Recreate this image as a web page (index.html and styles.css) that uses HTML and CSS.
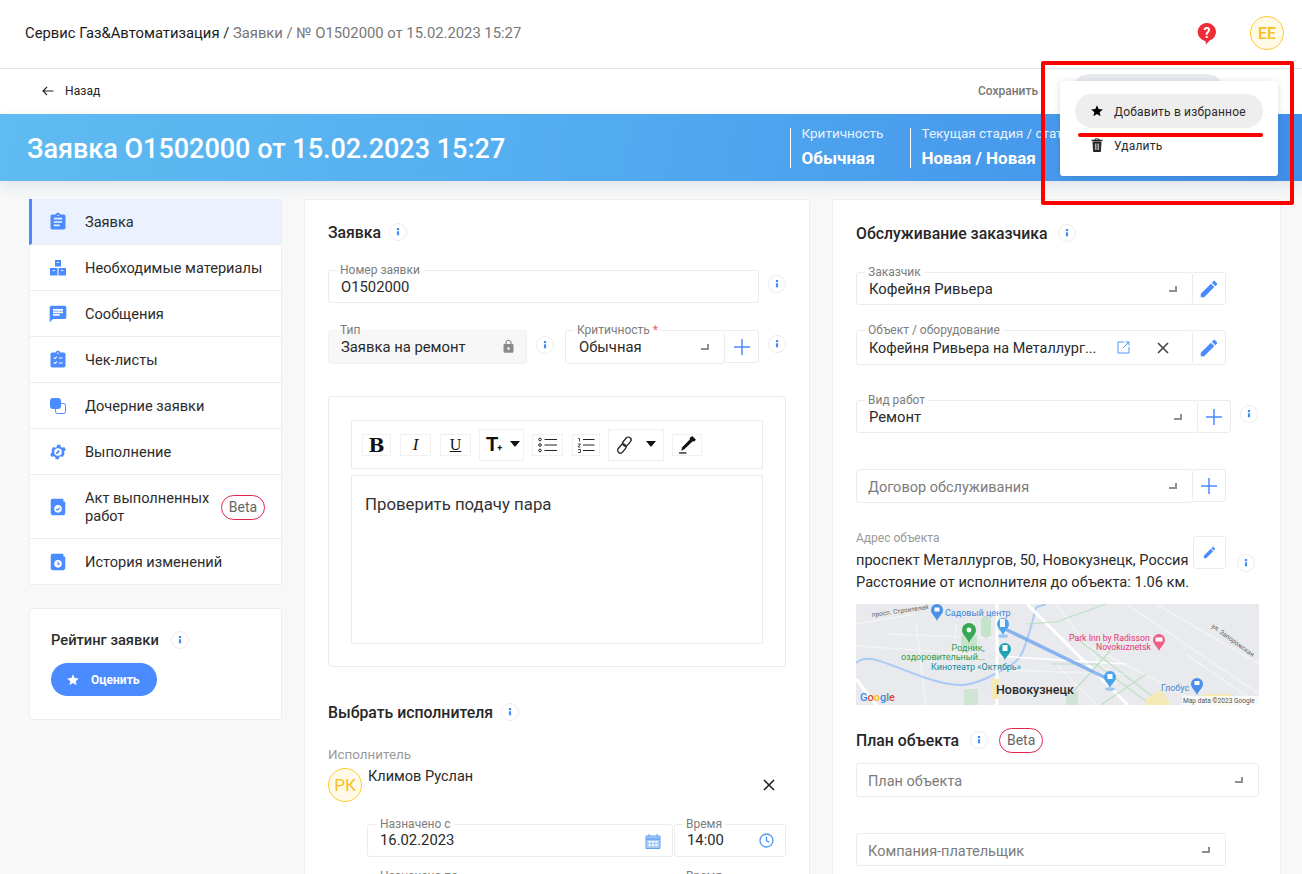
FILE: index.html
```html
<!DOCTYPE html>
<html lang="ru">
<head>
<meta charset="utf-8">
<title>Заявка О1502000</title>
<link rel="stylesheet" href="styles.css">
</head>
<body>
<svg class="defs" width="0" height="0" aria-hidden="true">
  <symbol id="i-star" viewBox="0 0 24 24"><path d="M12 17.27L18.18 21l-1.64-7.03L22 9.24l-7.19-.61L12 2 9.19 8.63 2 9.24l5.46 4.73L5.82 21z"/></symbol>
  <symbol id="i-edit" viewBox="0 0 24 24"><path d="M3 17.25V21h3.75L17.81 9.94l-3.75-3.75L3 17.25zM20.71 7.04c.39-.39.39-1.02 0-1.41l-2.34-2.34c-.39-.39-1.02-.39-1.41 0l-1.83 1.83 3.75 3.75 1.83-1.83z"/></symbol>
  <symbol id="i-plus" viewBox="0 0 18 18"><path d="M9 1v16M1 9h16" stroke="currentColor" stroke-width="1.5" fill="none"/></symbol>
  <symbol id="i-close" viewBox="0 0 12 12"><path d="M1 1l10 10M11 1L1 11" stroke="currentColor" stroke-width="1.6" fill="none"/></symbol>
  <symbol id="i-info" viewBox="0 0 18 18"><circle cx="9" cy="9" r="8.5" fill="#fff" stroke="#ececf0"/><rect x="7.9" y="5" width="2.2" height="2.2" fill="#3f8cf5"/><rect x="7.9" y="8.3" width="2.2" height="4" fill="#3f8cf5"/></symbol>
</svg>

<div class="page">
  <header class="topbar">
    <div class="crumbs"><span class="crumb-strong">Сервис Газ&amp;Автоматизация /</span> Заявки / № О1502000 от 15.02.2023 15:27</div>
    <svg class="help" width="20" height="24" viewBox="0 0 20 24"><path d="M10 1a9 9 0 0 1 2.6 17.6L9 22.5l-.6-3.6A9 9 0 0 1 10 1z" fill="#ee2b36"/><text x="10" y="15.5" text-anchor="middle" class="help-q">?</text></svg>
    <div class="avatar avatar-ee">ЕЕ</div>
  </header>

  <div class="toolbar">
    <div class="back">
      <svg width="12" height="10" viewBox="0 0 12 10"><path d="M11.5 5H1M5 1L1 5l4 4" stroke="#222" stroke-width="1.1" fill="none"/></svg>
      <span>Назад</span>
    </div>
    <div class="save">Сохранить</div>
    <div class="ghost-btn"></div>
  </div>

  <section class="hero">
    <h1 class="hero-title">Заявка О1502000 от 15.02.2023 15:27</h1>
    <div class="stat stat-a"><div class="stat-k">Критичность</div><div class="stat-v">Обычная</div></div>
    <div class="stat stat-b"><div class="stat-k">Текущая стадия / статус</div><div class="stat-v">Новая / Новая</div></div>
  </section>

  <main class="content">
    <aside class="side">
      <nav class="menu">
        <a class="menu-item active">
          <svg class="mi" viewBox="0 0 24 24"><path d="M19 3h-4.18C14.4 1.84 13.3 1 12 1c-1.3 0-2.4.84-2.82 2H5c-1.1 0-2 .9-2 2v14c0 1.1.9 2 2 2h14c1.1 0 2-.9 2-2V5c0-1.1-.9-2-2-2zm-7 0c.55 0 1 .45 1 1s-.45 1-1 1-1-.45-1-1 .45-1 1-1zm2 14H7v-2h7v2zm3-4H7v-2h10v2zm0-4H7V7h10v2z"/></svg>
          <span>Заявка</span>
        </a>
        <a class="menu-item">
          <svg class="mi" viewBox="-2 -2 20 20"><path d="M5 0h6v6.6H5zM0 8h7.5v7.5H0zM8.5 8H16v7.5H8.5z"/><path d="M6.8 2.4h2.4M2.6 10.6h2.4M11 10.6h2.4" stroke="#fff" stroke-width=".9"/></svg>
          <span>Необходимые материалы</span>
        </a>
        <a class="menu-item">
          <svg class="mi" viewBox="0 0 24 24"><path d="M20 2H4c-1.1 0-1.99.9-1.99 2L2 22l4-4h14c1.1 0 2-.9 2-2V4c0-1.1-.9-2-2-2zM6 9h12v2H6V9zm8 5H6v-2h8v2zm4-6H6V6h12v2z"/></svg>
          <span>Сообщения</span>
        </a>
        <a class="menu-item">
          <svg class="mi" viewBox="0 0 24 24"><path d="M19 3h-4.18C14.4 1.84 13.3 1 12 1c-1.3 0-2.4.84-2.82 2H5c-1.1 0-2 .9-2 2v14c0 1.1.9 2 2 2h14c1.1 0 2-.9 2-2V5c0-1.1-.9-2-2-2z"/><path d="M7 9l1.3 1.3L10.6 8M7 15l1.3 1.3 2.3-2.3M13 9.5h4.5M13 15.5h4.5" stroke="#fff" stroke-width="1.3" fill="none"/><circle cx="12" cy="4" r="1" fill="#fff"/></svg>
          <span>Чек-листы</span>
        </a>
        <a class="menu-item">
          <svg class="mi" viewBox="-2 -2 20 20"><rect x="5.5" y="5.5" width="10" height="10" rx="2" fill="#fff" stroke="#4a8bff"/><rect x="0" y="0" width="11" height="11" rx="3"/></svg>
          <span>Дочерние заявки</span>
        </a>
        <a class="menu-item">
          <svg class="mi" viewBox="0 0 24 24"><path d="M19.4 13c.1-.3.1-.7.1-1s0-.7-.1-1l2.1-1.6-2-3.5-2.5 1a7 7 0 0 0-1.7-1l-.4-2.7h-4l-.4 2.7a7 7 0 0 0-1.7 1l-2.500-1-2 3.500L4.600 11c-.1.3-.1.7-.1 1s0 .7.1 1l-2.100 1.600 2 3.500 2.500-1c.5.4 1.100.7 1.700 1l.4 2.700h4l.4-2.700c.6-.3 1.200-.6 1.700-1l2.500 1 2-3.500z"/><circle cx="12" cy="12" r="4.600" fill="#fff"/><path d="M10 14l3.500-3.500" stroke="#4a8bff" stroke-width="2.200"/></svg>
          <span>Выполнение</span>
        </a>
        <a class="menu-item tall">
          <svg class="mi" viewBox="-3 -2 22 22"><path d="M2 0h11a1 1 0 0 1 1 1v2h1a1 1 0 0 1 1 1v12a2 2 0 0 1-2 2H2a2 2 0 0 1-2-2V2a2 2 0 0 1 2-2z"/><circle cx="8" cy="11" r="4.200" fill="#fff"/><path d="M6 11l1.500 1.500L10.200 9.600" stroke="#4a8bff" stroke-width="1.300" fill="none"/></svg>
          <span class="menu-label">Акт выполненных работ</span>
          <span class="beta">Beta</span>
        </a>
        <a class="menu-item last">
          <svg class="mi" viewBox="-3 -2 22 22"><path d="M2 0h11a1 1 0 0 1 1 1v2h1a1 1 0 0 1 1 1v12a2 2 0 0 1-2 2H2a2 2 0 0 1-2-2V2a2 2 0 0 1 2-2z"/><circle cx="8" cy="11" r="4.200" fill="#fff"/><path d="M8 8.600V11.300h2" stroke="#4a8bff" stroke-width="1.300" fill="none"/></svg>
          <span>История изменений</span>
        </a>
      </nav>
      <div class="rating">
        <div class="rating-head"><span class="rating-title">Рейтинг заявки</span><svg class="info"><use href="#i-info"/></svg></div>
        <button class="rate-btn"><svg width="14" height="14"><use href="#i-star"/></svg>Оценить</button>
      </div>
    </aside>

    <section class="card card-mid">
      <div class="sec-head"><h2>Заявка</h2><svg class="info"><use href="#i-info"/></svg></div>

      <div class="row mt-28">
        <div class="field w-431 h-33"><label>Номер заявки</label><span class="val">О1502000</span></div>
        <svg class="info info-side"><use href="#i-info"/></svg>
      </div>

      <div class="row mt-27">
        <div class="field field-locked w-199 h-34"><label>Тип</label><span class="val val-up">Заявка на ремонт</span>
          <svg class="lock" width="15" height="15" viewBox="0 0 24 24"><path d="M18 8h-1V6c0-2.760-2.240-5-5-5S7 3.240 7 6v2H6c-1.100 0-2 .9-2 2v10c0 1.100.9 2 2 2h12c1.100 0 2-.9 2-2V10c0-1.100-.9-2-2-2zm-6 9c-1.100 0-2-.9-2-2s.9-2 2-2 2 .9 2 2-.9 2-2 2zm3.100-9H8.900V6c0-1.710 1.390-3.100 3.100-3.100 1.710 0 3.100 1.390 3.100 3.100v2z"/></svg>
        </div>
        <svg class="info info-mid"><use href="#i-info"/></svg>
        <div class="field field-crit w-160 h-34 ml-11"><label>Критичность <em>*</em></label><span class="val val-up">Обычная</span><i class="corner"></i></div>
        <div class="addon w-34 h-33"><svg width="18" height="18" class="ic-blue"><use href="#i-plus"/></svg></div>
        <svg class="info info-side"><use href="#i-info"/></svg>
      </div>

      <div class="editor">
        <div class="ed-tools">
          <span class="ed-btn b1 ed-bold">B</span>
          <span class="ed-btn b2 ed-ital">I</span>
          <span class="ed-btn b2 ed-und">U</span>
          <span class="ed-btn ed-drop b3"><span class="ed-t">T</span><small>+</small><i class="caret"></i></span>
          <span class="ed-btn b2"><svg width="20" height="16" viewBox="0 0 20 16" fill="none" stroke="#222"><circle cx="2" cy="2.500" r="1.300"/><circle cx="2" cy="8" r="1.300"/><circle cx="2" cy="13.500" r="1.300"/><path d="M6.500 2.500H19M6.500 8H19M6.500 13.500H19"/></svg></span>
          <span class="ed-btn b4"><svg width="18" height="16" viewBox="0 0 18 16" fill="none" stroke="#222"><path d="M1 1.500h1.500v3M1 7h2.500L1 10h2.500M1 12.500h2.500v3H1" stroke-width=".8"/><path d="M6 2.500H17.500M6 8H17.500M6 13.500H17.500"/></svg></span>
          <span class="ed-btn ed-drop b5"><svg width="20" height="20" viewBox="0 0 20 20" fill="none" stroke="#222" stroke-width="1.300"><rect x="9.500" y="1.500" width="5.500" height="10" rx="2.700" transform="rotate(40 12 6)"/><rect x="4.500" y="8.500" width="5.500" height="10" rx="2.700" transform="rotate(40 7 13)"/></svg><i class="caret caret-far"></i></span>
          <span class="ed-btn b6"><svg width="19" height="19" viewBox="0 0 18 18"><path d="M13.500 1l3.500 3.500-2 2-.8-.8L6 13.500 3 15l1-3.500 7.600-7.600-.8-.8z" fill="#111"/><path d="M1 17h7" stroke="#111" stroke-width="1.200"/></svg></span>
        </div>
        <div class="ed-area">Проверить подачу пара</div>
      </div>

      <div class="sec-head mt-36"><h2>Выбрать исполнителя</h2><svg class="info"><use href="#i-info"/></svg></div>
      <div class="cap cap-exec">Исполнитель</div>
      <div class="assignee">
        <div class="avatar avatar-pk">РК</div>
        <div class="assignee-name">Климов Руслан</div>
        <svg class="assignee-x" width="12" height="12"><use href="#i-close"/></svg>
      </div>
      <div class="row dates mt-22">
        <div class="field w-306 h-33"><label>Назначено с</label><span class="val val-up">16.02.2023</span>
          <svg class="f-ic" width="16" height="16" viewBox="0 0 16 16"><path d="M1 3h14v12.500H1z" fill="#a8cbf8" stroke="#5ea2f5"/><path d="M1 6h14" stroke="#5ea2f5" stroke-width="1.500"/><path d="M4 1v3M12 1v3" stroke="#5ea2f5"/><path d="M3.500 8h2.200v1.800H3.500zM6.900 8h2.200v1.800H6.900zM10.300 8h2.200v1.800h-2.200zM3.500 11.200h2.200V13H3.500zM6.900 11.200h2.200V13H6.900zM10.300 11.200h2.200V13h-2.200z" fill="#fff"/></svg>
        </div>
        <div class="field w-112 h-33 ml-1"><label>Время</label><span class="val val-up">14:00</span>
          <svg class="f-ic" width="15" height="15" viewBox="0 0 15 15" fill="none" stroke="#4a98f5" stroke-width="1.300"><circle cx="7.500" cy="7.500" r="6.500"/><path d="M7.500 3.800v4l2.600 1.500"/></svg>
        </div>
      </div>
      <div class="row dates mt-19">
        <div class="field w-306 h-33"><label>Назначено по</label></div>
        <div class="field w-112 h-33 ml-1"><label>Время</label></div>
      </div>
    </section>

    <section class="card card-right">
      <div class="sec-head"><h2>Обслуживание заказчика</h2><svg class="info info-title"><use href="#i-info"/></svg></div>

      <div class="row mt-29">
        <div class="field w-336 h-33"><label>Заказчик</label><span class="val">Кофейня Ривьера</span><i class="corner"></i></div>
        <div class="addon w-33 h-33"><svg width="22" height="22" class="ic-edit"><use href="#i-edit"/></svg></div>
      </div>

      <div class="row mt-25">
        <div class="field w-336 h-35"><label>Объект / оборудование</label><span class="val val-obj">Кофейня Ривьера на Металлург...</span>
          <svg class="open-ic" width="13" height="13" viewBox="0 0 13 13" fill="none" stroke="#4a98f5"><path d="M7 1H1v11h11V6M6 7l6-6M8.500 1H12v3.500"/></svg>
          <svg class="obj-x" width="12" height="12"><use href="#i-close"/></svg>
        </div>
        <div class="addon w-33 h-35"><svg width="22" height="22" class="ic-edit"><use href="#i-edit"/></svg></div>
      </div>

      <div class="row mt-35">
        <div class="field w-341 h-33"><label>Вид работ</label><span class="val">Ремонт</span><i class="corner"></i></div>
        <div class="addon w-33 h-33"><svg width="18" height="18" class="ic-blue"><use href="#i-plus"/></svg></div>
        <svg class="info info-work"><use href="#i-info"/></svg>
      </div>

      <div class="row mt-36">
        <div class="field w-336 h-34"><span class="val val-ph">Договор обслуживания</span><i class="corner"></i></div>
        <div class="addon w-33 h-33"><svg width="18" height="18" class="ic-blue"><use href="#i-plus"/></svg></div>
      </div>

      <div class="address">
        <div class="addr-text">
          <div class="cap cap-sm">Адрес объекта</div>
          <div class="addr-line">проспект Металлургов, 50, Новокузнецк, Россия</div>
          <div class="addr-line">Расстояние от исполнителя до объекта: 1.06 км.</div>
        </div>
        <div class="addr-btn"><svg width="15" height="15" class="ic-edit"><use href="#i-edit"/></svg></div>
        <svg class="info info-addr"><use href="#i-info"/></svg>
      </div>

      <svg class="map" width="403" height="101" viewBox="0 0 403 101">
        <rect width="403" height="101" fill="#e8eaed"/>
        <path d="M0 20L60 10M30 30L140 34M0 42L120 50M60 20L70 101M100 20l-3 45M200 0l60 80M270 0L403 90M300 0L403 60M230 40L403 130M140 66L270 70M200 60l40 41M330 50L403 101" stroke="#f2f3f5" stroke-width="1.500" fill="none"/>
        <path d="M0 59C12 48 30 60 67 73S117 82 141 69 165 56 174 26 176 6 190 0" stroke="#abcbf6" stroke-width="2" fill="none"/>
        <path d="M141 0V101" stroke="#fff" stroke-width="3"/>
        <path d="M171 0L272 101M0 75L20 101" stroke="#fff" stroke-width="3" fill="none"/>
        <path d="M140 52L270 60" stroke="#fff" stroke-width="1.500"/>
        <path d="M200 18L250 0M170 20L200 18M215 30L300 95M255 46L215 90M290 70L245 101M195 60H240L295 101" stroke="#bde0c4" stroke-width="1.200" fill="none"/>
        <rect x="125" y="12" width="10" height="22" rx="5" fill="#c4e3ca"/>
        <rect x="105" y="32" width="16" height="12" fill="#c4e3ca"/>
        <rect x="108" y="85" width="14" height="16" fill="#cfe4d2"/>
        <rect x="210" y="88" width="12" height="13" fill="#cfe4d2"/>
        <path d="M135 75h8v20h-8zM290 95l15-10 10 16h-25zM345 90h30v11h-20z" fill="#f6e9b8"/>
        <path d="M147 24L254 76" stroke="#6ba0ef" stroke-width="3.500" opacity=".75"/>
        <g class="m-pin"><path d="M81 17c-2-5-6-7-6-11a6 6 0 0 1 12 0c0 4-4 6-6 11z" fill="#4a90e8"/><rect x="78.500" y="3.500" width="5" height="4" fill="#fff"/></g>
        <path d="M113 39c-2-6-7-8-7-13a7 7 0 0 1 14 0c0 5-5 7-7 13z" fill="#34a853"/><circle cx="113" cy="26" r="2.400" fill="#fff"/>
        <ellipse cx="147" cy="32" rx="5" ry="1.800" fill="#9dc5f2"/>
        <path d="M147 31c-2-5-6-7-6-11a6 6 0 0 1 12 0c0 4-4 6-6 11z" fill="#4ba3ea"/><rect x="144" y="15" width="5" height="8" fill="#fff" opacity=".9"/>
        <path d="M149 56c-2-5-6-7-6-11a6 6 0 0 1 12 0c0 4-4 6-6 11z" fill="#1ea3b5"/><rect x="146.500" y="41" width="5" height="6" fill="#fff"/>
        <path d="M303 47c-2-5-6-7-6-11a6 6 0 0 1 12 0c0 4-4 6-6 11z" fill="#ee5e85"/><rect x="299.500" y="33.500" width="7" height="4" fill="#fff"/>
        <ellipse cx="254" cy="85" rx="5" ry="1.800" fill="#9dc5f2"/>
        <path d="M254 84c-2-5-6-7-6-11a6 6 0 0 1 12 0c0 4-4 6-6 11z" fill="#4ba3ea"/><rect x="251.500" y="70" width="5" height="5" fill="#fff"/>
        <path d="M341 91c-2-5-6-7-6-11a6 6 0 0 1 12 0c0 4-4 6-6 11z" fill="#4a90e8"/><rect x="338.500" y="77" width="5" height="4" fill="#fff"/>
        <text class="m-s" x="16" y="13" transform="rotate(-8 16 13)">просп. Строителей</text>
        <text class="m-s" x="355" y="23" transform="rotate(36 355 23)">ул. Запорожская</text>
        <text class="m-b" x="89" y="12">Садовый центр</text>
        <text class="m-g" x="112" y="47" text-anchor="middle">Родник,</text>
        <text class="m-g" x="87" y="56" text-anchor="middle">оздоровительный...</text>
        <text class="m-t" x="120" y="66" text-anchor="middle">Кинотеатр «Октябрь»</text>
        <text class="m-p" x="213" y="37">Park Inn by Radisson</text>
        <text class="m-p" x="240" y="46">Novokuznetsk</text>
        <text class="m-gl" x="305" y="87">Глобус</text>
        <text class="m-c" x="140" y="90">Новокузнецк</text>
        <text class="m-go" x="4" y="97"><tspan fill="#4285f4">G</tspan><tspan fill="#ea4335">o</tspan><tspan fill="#fbbc05">o</tspan><tspan fill="#4285f4">g</tspan><tspan fill="#34a853">l</tspan><tspan fill="#ea4335">e</tspan></text>
        <rect x="326" y="92" width="77" height="9" fill="#fff" opacity=".7"/>
        <text class="m-d" x="327" y="99">Map data ©2023 Google</text>
      </svg>

      <div class="sec-head plan-head"><h2>План объекта</h2><svg class="info"><use href="#i-info"/></svg><span class="beta">Beta</span></div>

      <div class="row mt-13">
        <div class="field w-403 h-34"><span class="val val-ph">План объекта</span><i class="corner"></i></div>
      </div>
      <div class="row mt-36">
        <div class="field w-370 h-33"><span class="val val-ph val-pay">Компания-плательщик</span><i class="corner"></i></div>
      </div>
    </section>
  </main>

  <div class="dropdown">
    <div class="dd-item dd-hover"><svg width="14" height="14"><use href="#i-star"/></svg><span>Добавить в избранное</span></div>
    <div class="dd-item"><svg width="14" height="14" viewBox="0 0 14 14" fill="none" stroke="#222"><path d="M1.500 2.500h11" stroke-width="1.400"/><path d="M5 2.500V1h4v1.500"/><path d="M3 4h8l-.6 9.500H3.600z" fill="#222"/><path d="M5.400 5.500v6.500M7 5.500v6.500M8.600 5.500v6.500" stroke="#fff" stroke-width=".7"/></svg><span>Удалить</span></div>
  </div>
  <div class="mark-box"></div>
  <div class="mark-line"></div>
</div>
</body>
</html>
```
FILE: styles.css
```css
* { box-sizing: border-box; }
html, body { margin: 0; padding: 0; }
body { font-family: Roboto, "Liberation Sans", sans-serif; color: #212529; background: #f8f8f8; }
.defs { position: absolute; }
.page { position: relative; width: 1302px; height: 874px; overflow: hidden; background: #f8f8f8; }

.topbar { height: 69px; background: #fff; border-bottom: 1px solid #e4e4e4; display: flex; align-items: center; padding: 0 18px 2px 25px; }
.crumbs { flex: 1; font-size: 14.800px; color: #777; }
.crumb-strong { color: #1c1c1c; }
.help { margin-right: 33px; margin-top: 2px; }
.help-q { font: 700 14px Roboto, sans-serif; fill: #fff; }
.avatar { border-radius: 50%; width: 34px; height: 34px; display: flex; align-items: center; justify-content: center; font-size: 16px; font-weight: 500; border: 1px solid #ffcb2e; background: #fff9e8; color: #f9bf1d; flex: none; }

.toolbar { height: 45px; background: #fff; display: flex; align-items: flex-start; padding-left: 42px; font-size: 12px; }
.back { display: flex; align-items: center; gap: 11px; height: 44px; color: #222; letter-spacing: .1px; }
.save { margin-left: auto; height: 44px; line-height: 44px; color: #777; font-weight: 500; }
.ghost-btn { width: 156px; height: 40px; margin: 5px 76px 0 32px; background: #e6eaef; border-radius: 20px; }

.hero { position: relative; z-index: 1; height: 67px; display: flex; align-items: center; padding-left: 27px; background: linear-gradient(100deg, #5fbbf1 0%, #55aef0 40%, #3f8eea 100%); box-shadow: 0 6px 14px rgba(70, 110, 160, .13); color: #fff; overflow: hidden; }
.hero-title { flex: 0 0 763px; margin: 2px 0 0; font-size: 27px; font-weight: 500; }
.stat { height: 40px; border-left: 1px solid #fff; padding-left: 10.500px; flex: none; }
.stat-a { width: 120px; }
.stat-k { font-size: 13.500px; line-height: 14px; margin-top: -2px; color: #e6f3ff; }
.stat-v { font-size: 17px; line-height: 20px; font-weight: 700; margin-top: 8px; }

.content { display: flex; align-items: flex-start; gap: 22px; padding: 18px 0 0 29px; }
.side { width: 253px; flex: none; }
.menu { background: #fff; border: 1px solid #eee; border-top: 0; border-left: 0; }
.menu-item { display: flex; align-items: center; height: 46px; padding: 1px 0 0 18px; font-size: 14.600px; color: #2c2c2c; border-bottom: 1px solid #eee; border-left: 1px solid #eee; }
.menu-item.last { border-bottom: 0; height: 45px; }
.menu-item.active { background: #ebf1fe; border-left: 3px solid #4a8bff; padding-left: 16px; }
.menu-item.tall { height: 64px; }
.mi { width: 20px; height: 20px; fill: #4a8bff; flex: none; margin-right: 17px; margin-top: -1px; }
.menu-label { width: 135px; line-height: 18px; }
.beta { display: inline-flex; align-items: center; justify-content: center; width: 44px; height: 25px; border: 1px solid #e6254f; border-radius: 13px; font-size: 14px; color: #666; margin-left: 1px; }
.rating { margin-top: 23px; height: 112px; background: #fff; border: 1px solid #eee; border-radius: 3px; padding: 21px; }
.rating-head { display: flex; align-items: center; gap: 12px; height: 20px; }
.rating-title { font-size: 14.700px; font-weight: 500; color: #2c2c2c; }
.rate-btn { margin-top: 13px; width: 106px; height: 33px; border: 0; border-radius: 17px; background: #4a8bff; color: #fff; font: 700 12px Roboto, sans-serif; display: flex; align-items: center; gap: 11px; padding: 0 0 0 15px; }
.rate-btn svg { fill: #fff; }

.info { width: 18px; height: 18px; flex: none; }
.card { background: #fff; border: 1px solid #eee; border-radius: 3px; height: 700px; flex: none; }
.card-mid { width: 506px; padding: 22px 23px 0 23px; }
.card-right { width: 449px; padding: 23px 22px 0 23px; }
.sec-head { display: flex; align-items: center; gap: 8px; height: 20px; }
.sec-head h2 { margin: 0; font-size: 15.800px; font-weight: 500; color: #262626; }
.info-title { margin-left: 3px; }

.row { display: flex; align-items: flex-start; }
.field { position: relative; background: #fff; border: 1px solid #ececec; border-radius: 3px; display: flex; align-items: center; padding: 0 12px; flex: none; }
.field label { position: absolute; top: -8px; left: 8px; padding: 0 3px; height: 14px; background: linear-gradient(#fff0 50%, #fff 50%); font-size: 12px; line-height: 14px; color: #7d7d7d; }
.field label em { color: #f0616f; font-style: normal; }
.val { font-size: 14.800px; color: #2a2a2a; white-space: nowrap; padding-top: 1px; }
.val-up { padding: 0 0 1px; }
.val-obj { font-size: 14.400px; }
.val-ph { color: #7c7c7c; font-size: 14.500px; margin-left: -1px; padding-top: 2px; }
.val-pay { padding-top: 3px; }
.field-locked { background: #f7f7f7; border-color: #f1f1f1; }
.field-locked label { background: linear-gradient(#fff0 50%, #f7f7f7 50%); }
.field-crit { padding-left: 13px; }
.lock { position: absolute; right: 10px; top: 8px; fill: #8a8a8a; }
.corner { position: absolute; right: 15px; top: 13px; width: 8px; height: 6px; border-right: 2px solid #8f8f8f; border-bottom: 2px solid #8f8f8f; }
.addon { display: flex; align-items: center; justify-content: center; border: 1px solid #ececec; border-left: 0; border-radius: 0 3px 3px 0; background: #fff; flex: none; }
.ic-blue { color: #4a8bff; }
.ic-edit { fill: #4a8bff; }
.info-side { margin: 5px 0 0 9px; }
.info-mid { margin: 6px 0 0 9px; }
.info-work { margin: 5px 0 0 9px; }
.ml-11 { margin-left: 11px; }
.ml-1 { margin-left: 1px; }
.w-431 { width: 431px; } .w-199 { width: 199px; } .w-160 { width: 160px; } .w-34 { width: 34px; } .w-33 { width: 33px; }
.w-306 { width: 306px; } .w-112 { width: 112px; } .w-336 { width: 337px; } .w-341 { width: 342px; }
.w-403 { width: 403px; } .w-370 { width: 370px; }
.h-33 { height: 33px; } .h-34 { height: 34px; } .h-35 { height: 35px; }
.mt-13 { margin-top: 13px; } .mt-19 { margin-top: 19px; } .mt-22 { margin-top: 22px; } .mt-25 { margin-top: 25px; }
.mt-27 { margin-top: 27px; } .mt-28 { margin-top: 28px; } .mt-29 { margin-top: 29px; } .mt-35 { margin-top: 35px; } .mt-36 { margin-top: 36px; }

.editor { margin-top: 32px; height: 271px; border: 1px solid #ececec; border-radius: 3px; padding: 23px 22px; }
.ed-tools { height: 49px; border: 1px solid #ececec; display: flex; align-items: center; padding-left: 10px; gap: 9px; }
.ed-btn { height: 22px; border: 1px solid #f0f0f0; display: flex; align-items: center; justify-content: center; position: relative; color: #111; flex: none; }
.b1 { width: 29px; } .b2 { width: 31px; } .b3 { width: 45px; height: 32px; } .b4 { width: 28px; } .b5 { width: 56px; height: 32px; margin-left: -1px; } .b6 { width: 30px; margin-left: -1px; }
.ed-btn.b2 + .b3, .ed-btn.b3 + .b2 { margin-left: -1px; }
.ed-bold { font: 700 19px "DejaVu Serif", serif; }
.ed-ital { font: italic 17px "Liberation Serif", serif; }
.ed-und { font: 16px "Liberation Serif", serif; text-decoration: underline; }
.ed-drop { justify-content: flex-start; padding-left: 6px; }
.ed-t { font: 700 20px "Liberation Sans", sans-serif; }
.ed-drop small { font-size: 9px; font-weight: 700; margin: 6px 0 0 -1px; }
.caret { position: absolute; right: 3px; top: 11px; border: 5px solid transparent; border-top: 6px solid #111; border-bottom: 0; }
.caret-far { right: 7px; }
.ed-area { margin-top: 6px; height: 169px; border: 1px solid #ececec; padding: 18px 13px; font-size: 16.800px; color: #333; }

.cap { font-size: 13.400px; line-height: 14px; color: #999; }
.sec-head.mt-36 { margin-top: 35px; }
.cap-exec { margin-top: 26px; }
.assignee { position: relative; display: flex; align-items: flex-start; margin-top: 6px; height: 34px; }
.avatar-pk { font-size: 17px; font-weight: 400; }
.assignee-name { margin: 0 0 0 6px; font-size: 14.500px; line-height: 18px; color: #2a2a2a; }
.assignee-x { position: absolute; right: 11px; top: 11px; color: #222; }
.dates { margin-left: 39px; }
.dates .field label { left: 9px; }
.dates .field + .field label { left: 8px; }
.f-ic { position: absolute; right: 11px; top: 8px; }

.open-ic { position: absolute; left: 260px; top: 10px; }
.obj-x { position: absolute; left: 300px; top: 11px; color: #444; }

.address { position: relative; margin-top: 33px; display: flex; align-items: flex-start; }
.addr-text { width: 337px; flex: none; margin-top: -6px; padding-top: 6px; }
.cap-sm { font-size: 12px; line-height: 16px; margin-top: -6px; }
.addr-line { font-size: 14.600px; line-height: 22px; white-space: nowrap; color: #2a2a2a; }
.cap-sm + .addr-line { margin-top: 3px; }
.addr-btn { width: 33px; height: 33px; border: 1px solid #ececec; border-radius: 3px; display: flex; align-items: center; justify-content: center; flex: none; }
.info-addr { margin: 18px 0 0 11px; }
.map { display: block; margin-top: 11px; }
.map text { font-family: Roboto, sans-serif; }
.m-s { font-size: 6.500px; fill: #666; }
.m-b { font-size: 9px; fill: #3f87dd; }
.m-gl { font-size: 9px; fill: #3f87dd; }
.m-g { font-size: 9px; fill: #2e9d4d; }
.m-t { font-size: 9px; fill: #14899b; }
.m-p { font-size: 8.700px; fill: #e8356d; }
.m-c { font-size: 12.500px; font-weight: 500; fill: #2c2c2c; }
.m-go { font-size: 11px; font-weight: 500; }
.m-d { font-size: 6.600px; fill: #555; }
.plan-head { margin-top: 25px; gap: 11px; }
.plan-head .beta { margin-left: 0; }

.dropdown { position: absolute; z-index: 5; left: 1060px; top: 81px; width: 218px; height: 95px; background: #fff; border-radius: 3px; box-shadow: 0 1px 6px rgba(50, 60, 80, .18); padding-top: 13px; }
.dd-item { display: flex; align-items: center; gap: 10px; margin-left: 15px; width: 188px; height: 34px; padding-left: 15px; font-size: 12px; letter-spacing: .2px; color: #2a2a2a; }
.dd-item span { padding-top: 2px; }
.dd-hover { background: #eee; border-radius: 17px; }
.mark-box { position: absolute; z-index: 6; left: 1041px; top: 61px; width: 253px; height: 144px; border: 4px solid #f00; border-radius: 2px; }
.mark-line { position: absolute; z-index: 6; left: 1078px; top: 133px; width: 185px; height: 4px; background: #f00; border-radius: 2px; }
```
